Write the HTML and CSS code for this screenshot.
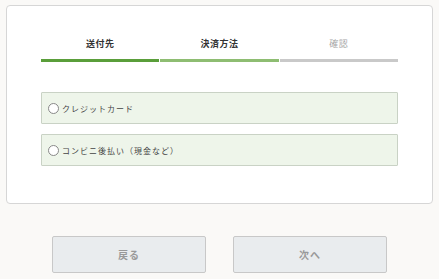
FILE: index.html
```html
<!DOCTYPE html>
<html lang="ja">

<head>
    <meta charset="UTF-8">
    <meta name="viewport" content="width=device-width, initial-scale=1.0">
    <title>決済方法</title>
    <link rel="stylesheet" href="styles.css">
</head>

<body>
    <div class="card">
        <div class="steps">
            <div class="step step-done">
                <span class="step-label">送付先</span>
                <div class="step-bar"></div>
            </div>
            <div class="step step-current">
                <span class="step-label">決済方法</span>
                <div class="step-bar"></div>
            </div>
            <div class="step step-next">
                <span class="step-label">確認</span>
                <div class="step-bar"></div>
            </div>
        </div>

        <div class="options">
            <label class="option">
                <span class="radio"></span>
                <span class="option-text">クレジットカード</span>
            </label>
            <label class="option">
                <span class="radio"></span>
                <span class="option-text">コンビニ後払い（現金など）</span>
            </label>
        </div>
    </div>

    <div class="button-group">
        <button type="button" class="nav-btn">戻る</button>
        <button type="button" class="nav-btn">次へ</button>
    </div>
</body>

</html>
```

FILE: styles.css
```css
body {
    margin: 0;
    font-family: "Noto Sans CJK JP", "Noto Sans", sans-serif;
    background-color: #faf9f7;
    color: #333;
}

.card {
    margin: 5px 6px 0;
    height: 199px;
    box-sizing: border-box;
    background-color: white;
    border: 1px solid #d6d6d6;
    border-radius: 4px;
    padding: 31px 34px 0;
}

.steps {
    display: flex;
    gap: 1px;
}

.step {
    flex: 1;
    display: flex;
    flex-direction: column;
    align-items: center;
}

.step-label {
    font-size: 9px;
    line-height: 14px;
    letter-spacing: 0.5px;
    font-weight: bold;
    margin-bottom: 8px;
}

.step-bar {
    width: 100%;
    height: 3px;
}

.step-done .step-bar {
    background-color: #5a9e3a;
}

.step-current .step-bar {
    background-color: #8ebd72;
}

.step-next .step-label {
    color: #a8a8a8;
    font-weight: normal;
}

.step-next .step-bar {
    background-color: #c9c9c9;
}

.options {
    margin-top: 30px;
    display: flex;
    flex-direction: column;
    gap: 10px;
}

.option {
    display: flex;
    align-items: center;
    gap: 3px;
    height: 32px;
    box-sizing: border-box;
    padding: 0 6px;
    background-color: #eef5ea;
    border: 1px solid #c9d2c5;
    border-radius: 1px;
    cursor: pointer;
}

.radio {
    width: 9px;
    height: 9px;
    border: 1px solid #888;
    border-radius: 50%;
    background-color: white;
}

.option-text {
    font-size: 8px;
    letter-spacing: 1px;
    color: #444;
}

.button-group {
    display: flex;
    justify-content: center;
    gap: 27px;
    margin-top: 32px;
}

.nav-btn {
    width: 154px;
    height: 37px;
    background-color: #e9ecee;
    border: 1px solid #c8c8c8;
    border-radius: 2px;
    color: #999;
    font-family: inherit;
    font-size: 10px;
    font-weight: bold;
    letter-spacing: 1px;
    cursor: pointer;
}
```
